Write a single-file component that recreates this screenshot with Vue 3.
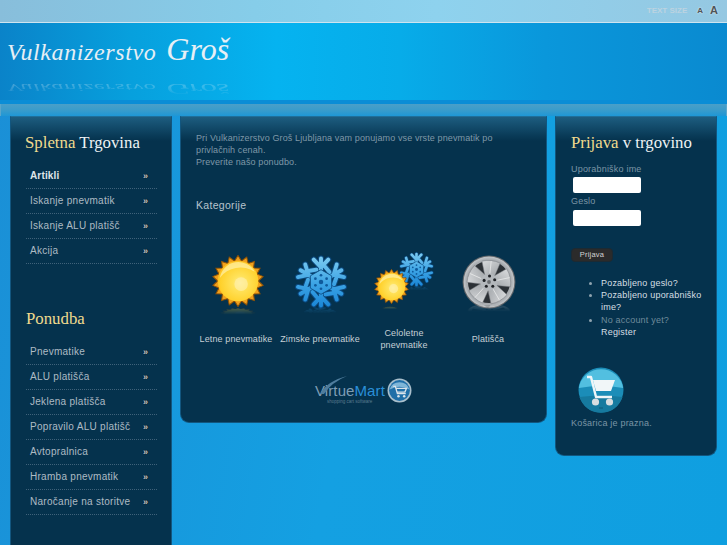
<script setup>
const menu1 = ['Artikli', 'Iskanje pnevmatik', 'Iskanje ALU platišč', 'Akcija']
const menu2 = ['Pnevmatike', 'ALU platišča', 'Jeklena platišča', 'Popravilo ALU platišč', 'Avtopralnica', 'Hramba pnevmatik', 'Naročanje na storitve']

function sunPoints(n, R, r) {
  const p = []
  for (let i = 0; i < n * 2; i++) {
    const a = (Math.PI * i) / n - Math.PI / 2
    const q = i % 2 ? r : R
    p.push((50 + q * Math.cos(a)).toFixed(1) + ',' + (50 + q * Math.sin(a)).toFixed(1))
  }
  return p.join(' ')
}
const spikes = sunPoints(18, 49, 39)

function flakePath() {
  const base = [[[0, 0], [0, -42]], [[0, -26], [-13, -40]], [[0, -26], [13, -40]], [[-8, -22], [-20, -20]]]
  let d = ''
  for (let k = 0; k < 6; k++) {
    const a = (k * Math.PI) / 3
    const c = Math.cos(a)
    const s = Math.sin(a)
    for (const [p, q] of base) {
      const x1 = 50 + p[0] * c - p[1] * s
      const y1 = 50 + p[0] * s + p[1] * c
      const x2 = 50 + q[0] * c - q[1] * s
      const y2 = 50 + q[0] * s + q[1] * c
      d += `M${x1.toFixed(1)} ${y1.toFixed(1)}L${x2.toFixed(1)} ${y2.toFixed(1)}`
    }
  }
  return d
}
const flake = flakePath()
const spokes = [0, 72, 144, 216, 288]
</script>

<template>
  <div class="page">
    <svg class="defs" width="0" height="0" aria-hidden="true">
      <defs>
        <radialGradient id="sunFill" cx="0.55" cy="0.55" r="0.6">
          <stop offset="0" stop-color="#ffef9a" />
          <stop offset="0.3" stop-color="#ffe25a" />
          <stop offset="0.8" stop-color="#ffd12c" />
          <stop offset="1" stop-color="#fbb81a" />
        </radialGradient>
        <linearGradient id="flakeFill" gradientUnits="userSpaceOnUse" x1="0" y1="5" x2="0" y2="95">
          <stop offset="0" stop-color="#7ccbf0" />
          <stop offset="0.55" stop-color="#3aa2e4" />
          <stop offset="1" stop-color="#1a86d6" />
        </linearGradient>
        <radialGradient id="rimFill" cx="0.5" cy="0.5" r="0.55">
          <stop offset="0" stop-color="#9a9ea2" />
          <stop offset="0.8" stop-color="#a8acb0" />
          <stop offset="1" stop-color="#dcdee0" />
        </radialGradient>
        <linearGradient id="spokeFill" x1="0" y1="0" x2="1" y2="1">
          <stop offset="0" stop-color="#dadcde" />
          <stop offset="1" stop-color="#9b9fa3" />
        </linearGradient>
        <symbol id="sun" viewBox="0 0 100 100">
          <polygon :points="spikes" fill="#f0a01c" stroke="#8f5206" stroke-width="2" />
          <circle cx="50" cy="50" r="39" fill="url(#sunFill)" />
          <circle cx="56" cy="56" r="13" fill="#fff0a8" opacity="0.7" />
          <path d="M15 44 A36 36 0 0 1 82 32 A50 50 0 0 0 15 44Z" fill="#fff6c0" opacity="0.6" />
        </symbol>
        <symbol id="flake" viewBox="0 0 100 100">
          <path :d="flake" fill="none" stroke="#0c4a80" stroke-width="10.5" stroke-linecap="round" />
          <path :d="flake" fill="none" stroke="url(#flakeFill)" stroke-width="7" stroke-linecap="round" />
          <polygon points="50,28 69,39 69,61 50,72 31,61 31,39" fill="url(#flakeFill)" stroke="#0d4f86" stroke-width="1.5" />
          <g fill="#0f5a9c">
            <circle cx="50" cy="50" r="4" />
            <circle cx="50" cy="38" r="2.4" /><circle cx="50" cy="62" r="2.4" />
            <circle cx="40" cy="44" r="2.4" /><circle cx="60" cy="44" r="2.4" />
            <circle cx="40" cy="56" r="2.4" /><circle cx="60" cy="56" r="2.4" />
          </g>
        </symbol>
        <symbol id="wheel" viewBox="0 0 100 100">
          <circle cx="50" cy="50" r="49" fill="#62666a" />
          <circle cx="50" cy="50" r="47" fill="url(#rimFill)" />
          <circle cx="50" cy="50" r="39" fill="#2c3136" />
          <g v-for="a in spokes" :key="a" :transform="`rotate(${a + 6} 50 50)`">
            <path d="M42 42 L33 13 Q50 7 67 13 L58 42Z" fill="url(#spokeFill)" stroke="#70747a" stroke-width="0.8" />
            <path d="M50 40 L50 11" stroke="#eceded" stroke-width="1.6" opacity="0.8" />
          </g>
          <circle cx="50" cy="50" r="16" fill="#b3b7bb" />
          <g fill="#1f2226">
            <circle cx="51" cy="39" r="2.8" /><circle cx="60.5" cy="46" r="2.8" /><circle cx="57" cy="58" r="2.8" />
            <circle cx="45" cy="58" r="2.8" /><circle cx="41" cy="47" r="2.8" />
          </g>
          <circle cx="50" cy="50" r="3.5" fill="#6b6f73" />
        </symbol>
      </defs>
    </svg>

    <div class="topbar">
      <span class="size-label">TEXT SIZE</span>
      <span class="size-a small">A</span>
      <span class="size-a large">A</span>
    </div>

    <header class="header">
      <div class="logo">
        <span class="logo-a">Vulkanizerstvo</span><span class="logo-b">Groš</span>
        <div class="logo-mirror" aria-hidden="true">
          <span class="logo-a">Vulkanizerstvo</span><span class="logo-b">Groš</span>
        </div>
      </div>
    </header>

    <div class="band"></div>

    <main class="main">
      <aside class="panel left">
        <h3 class="title first"><em>Spletna</em> Trgovina</h3>
        <ul class="menu">
          <li v-for="(m, i) in menu1" :key="m" :class="{ active: i === 0 }">
            <span>{{ m }}</span><b>»</b>
          </li>
        </ul>
        <h3 class="title second"><em>Ponudba</em></h3>
        <ul class="menu">
          <li v-for="m in menu2" :key="m"><span>{{ m }}</span><b>»</b></li>
        </ul>
      </aside>

      <section class="panel center">
        <p class="intro">Pri Vulkanizerstvo Groš Ljubljana vam ponujamo vse vrste pnevmatik po<br />privlačnih cenah.<br />Preverite našo ponudbo.</p>
        <h4 class="cat-title">Kategorije</h4>
        <div class="cats">
          <div class="cat">
            <div class="pic">
              <svg class="sun-big" width="52" height="52"><use href="#sun" /></svg>
              <svg class="reflect sun-ref" width="36" height="36"><use href="#sun" /></svg>
            </div>
            <span>Letne pnevmatike</span>
          </div>
          <div class="cat">
            <div class="pic">
              <svg class="flake-big" width="56" height="56"><use href="#flake" /></svg>
              <svg class="reflect flake-ref" width="36" height="36"><use href="#flake" /></svg>
            </div>
            <span>Zimske pnevmatike</span>
          </div>
          <div class="cat">
            <div class="pic">
              <svg class="flake-small" width="37" height="37"><use href="#flake" /></svg>
              <svg class="sun-small" width="35" height="35"><use href="#sun" /></svg>
              <svg class="reflect flake-small-ref" width="24" height="24"><use href="#flake" /></svg>
              <svg class="reflect sun-small-ref" width="16" height="16"><use href="#sun" /></svg>
            </div>
            <span class="low">Celoletne<br />pnevmatike</span>
          </div>
          <div class="cat">
            <div class="pic">
              <svg class="wheel-big" width="54" height="54"><use href="#wheel" /></svg>
              <svg class="reflect wheel-ref" width="44" height="44"><use href="#wheel" /></svg>
            </div>
            <span>Platišča</span>
          </div>
        </div>
        <div class="vm">
          <span class="vm-text">
            <svg class="swoosh" width="30" height="20" viewBox="0 0 30 20"><path d="M1 19Q8 6 28 1Q13 7 5 19Z" fill="#4f7d9d" /></svg>
            <i>Virtue</i><b>Mart</b><small>shopping cart software</small>
          </span>
          <svg width="25" height="25" viewBox="0 0 24 24">
            <circle cx="12" cy="12" r="11.5" fill="#a9bfcc" />
            <circle cx="12" cy="12" r="10" fill="#1f6fa8" />
            <path d="M2.5 11A10 10 0 0 1 21.5 11Q12 6 2.5 11Z" fill="#7fb6d8" />
            <path d="M6 8h2l2 7h8M8.6 10h10l-1.4 3.5H9.6" fill="none" stroke="#d9e3ea" stroke-width="1.3" />
            <circle cx="11" cy="17.5" r="1.2" fill="#d9e3ea" /><circle cx="16.5" cy="17.5" r="1.2" fill="#d9e3ea" />
          </svg>
        </div>
      </section>

      <aside class="panel right">
        <h3 class="title login"><em>Prijava</em> v trgovino</h3>
        <form class="form" @submit.prevent>
          <label>Uporabniško ime</label>
          <input type="text" />
          <label>Geslo</label>
          <input type="password" />
          <button type="button">Prijava</button>
        </form>
        <ul class="links">
          <li>Pozabljeno geslo?</li>
          <li>Pozabljeno uporabniško ime?</li>
          <li><span class="dim">No account yet?</span><br />Register</li>
        </ul>
        <div class="cart">
          <svg width="46" height="46" viewBox="0 0 46 46">
            <circle cx="23" cy="23" r="22.5" fill="#1b8db8" />
            <path d="M.8 21A22.5 22.5 0 0 1 45.2 21Q23 17 .8 21Z" fill="#52bfe0" />
            <path d="M1.5 30Q23 27 44.5 30A22.5 22.5 0 0 1 1.5 30Z" fill="#167a9f" />
            <path d="M9 10h4l5 20h16" fill="none" stroke="#eef5f8" stroke-width="2.4" stroke-linejoin="round" />
            <path d="M15 13h22l-4 11H18Z" fill="#f1f6f8" />
            <circle cx="17.5" cy="35" r="3.6" fill="#d8dde0" />
            <circle cx="31.5" cy="35" r="3.6" fill="#d8dde0" />
            <path d="M21 41h4" stroke="#0d5a78" stroke-width="1" />
          </svg>
        </div>
        <p class="empty">Košarica je prazna.</p>
      </aside>
    </main>
  </div>
</template>

<style>
html, body { margin: 0; overflow: hidden; }
</style>

<style scoped>
.page {
  width: 727px;
  height: 545px;
  overflow: hidden;
  position: relative;
  font-family: "Liberation Sans", Arial, sans-serif;
  font-size: 11px;
  background: linear-gradient(100deg, #1b8fd6 0%, #14a0e2 50%, #0f9fe0 100%);
}
.defs { position: absolute; }
.topbar {
  height: 23px;
  box-sizing: border-box;
  display: flex;
  justify-content: flex-end;
  align-items: center;
  padding: 0 9px 1px 0;
  border-bottom: 1px solid #cfe4ef;
  background: linear-gradient(90deg, #88bedb 0%, #86cde9 35%, #8ed2ee 60%, #95c8e2 100%);
}
.size-label {
  font-size: 8px;
  font-weight: 700;
  color: #bcd3e1;
  margin-right: 10px;
}
.size-a { font-weight: 700; color: #4f5558; text-shadow: 0 0 2px #f2f4f5; line-height: 1; }
.size-a.small { font-size: 8px; margin-right: 7px; }
.size-a.large { font-size: 11px; }

.header {
  height: 81px;
  box-sizing: border-box;
  padding: 9px 0 0 7px;
  border-bottom: 4px solid #0b8dd6;
  background: linear-gradient(90deg, #0a83c9 0%, #07a0dd 18%, #05b3f0 38%, #07ace9 55%, #0a97db 75%, #0a8ad0 100%);
}
.logo {
  position: relative;
  color: #e6eff5;
  font-family: "Liberation Serif", serif;
  font-style: italic;
  white-space: nowrap;
  line-height: 34px;
  height: 34px;
}
.logo-a { font-size: 24px; letter-spacing: 0.6px; }
.logo-b { font-size: 32px; margin-left: 10px; }
.logo-mirror {
  position: absolute;
  left: 0;
  top: 35px;
  transform: scaleY(-0.45);
  transform-origin: 0 50%;
  opacity: 0.4;
  -webkit-mask-image: linear-gradient(to top, #000, transparent);
  mask-image: linear-gradient(to top, #000, transparent);
}
.band {
  height: 12px;
  background: linear-gradient(180deg, #4a9fc8 0%, #3a9ccb 50%, #1f97d6 100%);
  border: 1px solid #5aa6cb;
  border-width: 0 1px;
  box-sizing: border-box;
}
.main {
  display: flex;
  align-items: flex-start;
  gap: 8px;
  padding: 0 10px;
}
.panel {
  box-sizing: border-box;
  border: 1px solid #12567f;
  border-top-color: #1f6f9a;
  border-radius: 0 0 9px 9px;
  background: linear-gradient(180deg, #1d5d80 0, #0a3c59 18px, #05324d 24px, #05324d 100%);
}
.left { width: 162px; height: 450px; padding: 15px 14px 0 15px; border-radius: 0; }
.center { width: 367px; height: 307px; padding: 15px 16px 0 15px; }
.right { width: 162px; height: 340px; padding: 15px 14px 0 15px; }

.title {
  margin: 0;
  font-family: "Liberation Serif", serif;
  font-weight: 400;
  font-size: 16.8px;
  line-height: 22px;
  color: #eef2f4;
  white-space: nowrap;
}
.title em { font-style: normal; color: #f0db8e; }
.title.first { margin-left: -1px; }
.title.second { margin-top: 44px; }
.menu { list-style: none; margin: 10px 0 0; padding: 0; }
.menu li {
  height: 25px;
  box-sizing: border-box;
  padding: 0 9px 1px 4px;
  display: flex;
  justify-content: space-between;
  align-items: center;
  border-bottom: 1px dotted #40627a;
  color: #aebbc4;
  letter-spacing: 0.28px;
  font-size: 10px;
}
.menu li.active { font-weight: 700; color: #dfe5e9; letter-spacing: 0.15px; }
.menu b { color: #c9c9c9; font-size: 9px; font-weight: 700; text-shadow: 0 0 1px #000; letter-spacing: 0; }

.intro {
  margin: 0;
  color: #7f98a8;
  font-size: 9px;
  line-height: 12px;
  letter-spacing: 0.12px;
}
.cat-title {
  margin: 31px 0 0;
  color: #b7c4cd;
  font-weight: 400;
  font-size: 10.5px;
  line-height: 12px;
  letter-spacing: 0.3px;
}
.cats {
  display: grid;
  grid-template-columns: repeat(4, 84px);
  margin: 26px 0 0 -2px;
  color: #c6d0d6;
  font-size: 9px;
  line-height: 12px;
  text-align: center;
  letter-spacing: 0.12px;
}
.cat { display: flex; flex-direction: column; align-items: center; }
.cat span { margin-top: 7px; white-space: nowrap; }
.cat span.low { margin-top: 1px; }
.pic { position: relative; width: 84px; height: 89px; }
.pic svg { position: absolute; }
.sun-big { left: 18px; top: 18px; }
.flake-big { left: 15px; top: 17px; }
.wheel-big { left: 16px; top: 18px; }
.flake-small { left: 36px; top: 14px; }
.sun-small { left: 12px; top: 32px; }
.reflect {
  transform: scaleY(-0.35);
  opacity: 0.3;
  -webkit-mask-image: linear-gradient(to bottom, transparent 45%, #000);
  mask-image: linear-gradient(to bottom, transparent 45%, #000);
}
.sun-ref { left: 26px; top: 59px; }
.flake-ref { left: 24px; top: 58px; }
.wheel-ref { left: 21px; top: 52px; }
.flake-small-ref { left: 44px; top: 41px; }
.sun-small-ref { left: 20px; top: 64px; }

.vm {
  display: flex;
  align-items: center;
  justify-content: flex-start;
  margin: 27px 0 0 119px;
}
.vm-text {
  position: relative;
  display: block;
  font-family: "Liberation Sans", Arial, sans-serif;
  font-size: 15px;
  line-height: 24px;
  height: 24px;
  letter-spacing: 0.1px;
  white-space: nowrap;
  margin-right: 2px;
}
.swoosh { position: absolute; left: 4px; top: -4px; }
.vm-text i { font-style: normal; color: #7f9db5; }
.vm-text b { font-weight: 400; color: #2a8fd8; }
.vm-text small {
  position: absolute;
  left: 12px;
  top: 20px;
  font-size: 4.5px;
  line-height: 6px;
  letter-spacing: 0;
  color: #5c7c90;
}

.form { display: flex; flex-direction: column; align-items: flex-start; margin-top: 9px; }
.form label {
  color: #7b95a5;
  font-size: 9px;
  line-height: 12px;
  letter-spacing: 0.2px;
}
.form input {
  box-sizing: border-box;
  width: 68px;
  height: 16px;
  margin: 2px 0 2px 2px;
  padding: 0;
  border: 0;
  border-radius: 2px;
  background: #fff;
}
.form input:last-of-type { margin-top: 3px; }
.form button {
  margin-top: 20px;
  width: 42px;
  height: 14px;
  padding: 0;
  border: 1px solid #1c2a33;
  border-radius: 4px;
  background: #2b2b2b;
  color: #d5d5d5;
  font-family: inherit;
  font-size: 7.5px;
  letter-spacing: 0.2px;
  line-height: 10px;
}
.links {
  margin: 15px 0 0;
  padding: 0 0 0 30px;
  color: #d6dfe4;
  font-size: 9px;
  line-height: 12.2px;
  letter-spacing: 0.2px;
}
.links li::marker { color: #8fa3af; }
.dim { color: #6f8b9b; }
.cart { margin: 29px 0 0 7px; height: 46px; }
.cart svg { display: block; }
.empty {
  margin: 4px 0 0;
  color: #7b95a5;
  font-size: 9px;
  line-height: 12px;
  letter-spacing: 0.2px;
}
</style>
